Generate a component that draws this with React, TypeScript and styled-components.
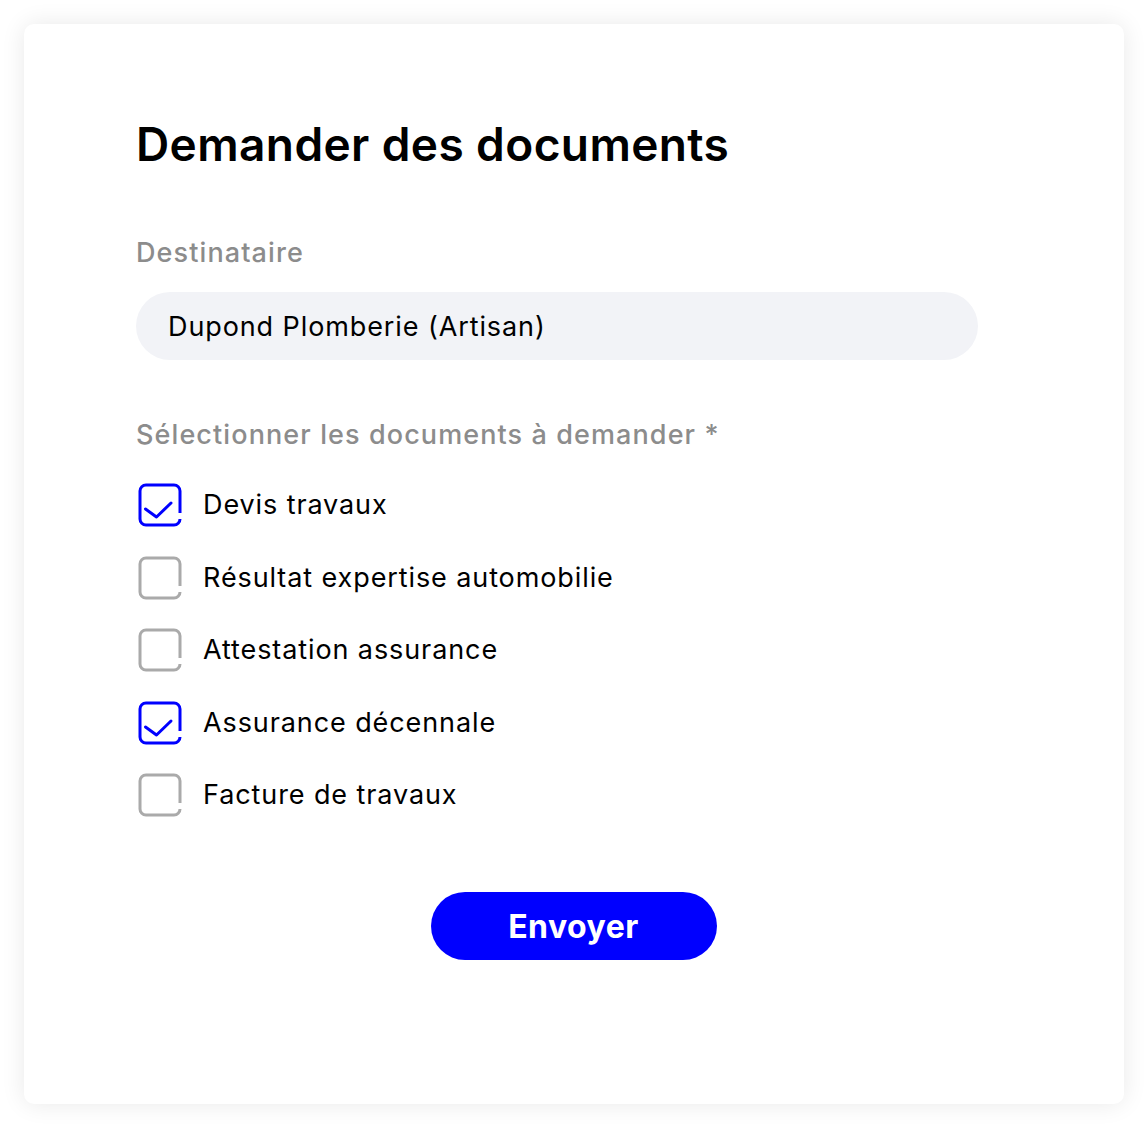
import React, { useState } from "react";
import styled, { createGlobalStyle } from "styled-components";

const GlobalStyle = createGlobalStyle`
  body {
    margin: 0;
    background: #ffffff;
    font-family: "Inter", "Noto Sans", sans-serif;
    color: #000000;
  }
`;

const Page = styled.div`
  padding: 24px;
  width: 1100px;
`;

const Card = styled.div`
  background: #ffffff;
  border-radius: 10px;
  box-shadow: 0 0 24px rgba(0, 0, 0, 0.09);
  height: 1080px;
  box-sizing: border-box;
  padding: 92px 146px 0 112px;
  display: flex;
  flex-direction: column;
`;

const Title = styled.h1`
  margin: 0;
  font-size: 46px;
  line-height: 56px;
  font-weight: 600;
  letter-spacing: 0.4px;
`;

const Label = styled.div<{ $top: number }>`
  margin-top: ${(p) => p.$top}px;
  font-size: 27px;
  line-height: 34px;
  font-weight: 500;
  color: #8c8c8c;
  letter-spacing: 1.1px;
`;

const Field = styled.div`
  margin-top: 22px;
  height: 68px;
  border-radius: 34px;
  background: #f2f3f7;
  display: flex;
  align-items: center;
  padding: 0 32px;
  font-size: 27px;
  letter-spacing: 0.9px;
`;

const List = styled.div`
  margin-top: 30px;
  display: flex;
  flex-direction: column;
  gap: 26.5px;
`;

const Row = styled.label`
  display: flex;
  align-items: center;
  gap: 20px;
  font-size: 27px;
  line-height: 44px;
  letter-spacing: 0.9px;
  cursor: pointer;
`;

const Box = styled.svg`
  width: 46px;
  height: 46px;
  flex: none;
  margin-left: 1px;
`;

const Footer = styled.div`
  margin-top: 74px;
  display: flex;
  justify-content: center;
  padding-left: 33px;
`;

const SendButton = styled.button`
  width: 286px;
  height: 68px;
  border: 0;
  border-radius: 34px;
  background: #0000ff;
  color: #ffffff;
  font-family: inherit;
  font-size: 32px;
  font-weight: 700;
  letter-spacing: 0.5px;
  cursor: pointer;
`;

const Check = ({ on }: { on: boolean }) => (
  <Box viewBox="0 0 46 46">
    <path
      d="M43 31 V9 A6 6 0 0 0 37 3 H9 A6 6 0 0 0 3 9 V37 A6 6 0 0 0 9 43 H37 A6 6 0 0 0 43 37"
      fill="none"
      stroke={on ? "#0000ff" : "#aaaaaa"}
      strokeWidth="3"
    />
    {on && (
      <path
        d="M8.5 27 L19.5 35 L34 21"
        fill="none"
        stroke="#0000ff"
        strokeWidth="3"
        strokeLinecap="round"
        strokeLinejoin="round"
      />
    )}
  </Box>
);

const docs = [
  { name: "Devis travaux", on: true },
  { name: "Résultat expertise automobilie", on: false },
  { name: "Attestation assurance", on: false },
  { name: "Assurance décennale", on: true },
  { name: "Facture de travaux", on: false },
];

const App = () => {
  const [checked, setChecked] = useState(docs.map((d) => d.on));

  return (
    <Page>
      <GlobalStyle />
      <Card>
        <Title>Demander des documents</Title>
        <Label $top={64}>Destinataire</Label>
        <Field>Dupond Plomberie (Artisan)</Field>
        <Label $top={58}>Sélectionner les documents à demander *</Label>
        <List>
          {docs.map((d, i) => (
            <Row
              key={d.name}
              onClick={() =>
                setChecked((c) => c.map((v, j) => (j === i ? !v : v)))
              }
            >
              <Check on={checked[i]} />
              {d.name}
            </Row>
          ))}
        </List>
        <Footer>
          <SendButton>Envoyer</SendButton>
        </Footer>
      </Card>
    </Page>
  );
};

export default App;
